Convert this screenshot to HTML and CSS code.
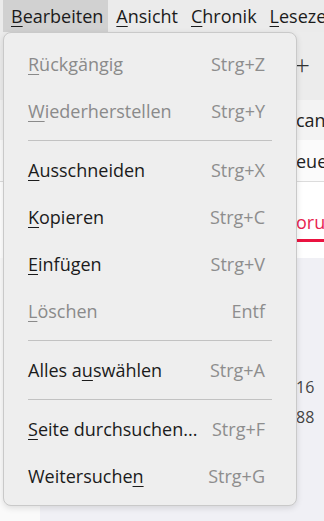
FILE: index.html
```html
<!DOCTYPE html>
<html lang="de">
<head>
    <meta charset="UTF-8">
    <meta name="viewport" content="width=device-width, initial-scale=1.0">
    <title>Bearbeiten</title>
    <link rel="stylesheet" href="styles.css">
</head>
<body>
    <div class="menubar">
        <span class="menubar-item active"><u>B</u>earbeiten</span>
        <span class="menubar-item"><u>A</u>nsicht</span>
        <span class="menubar-item"><u>C</u>hronik</span>
        <span class="menubar-item"><u>L</u>esezeichen</span>
    </div>

    <div class="toolbar">
        <span class="new-tab">+</span>
    </div>
    <div class="urlbar"><span class="page-text">can</span></div>
    <div class="bookmarks"><span class="page-text">euer</span></div>
    <div class="tabs-row">
        <span class="page-tab">orun</span>
    </div>
    <div class="content">
        <div class="sidebar"></div>
        <div class="main">
            <div class="num num-first">16</div>
            <div class="num">88</div>
        </div>
    </div>

    <!-- Kontextmenü Bearbeiten -->
    <div class="popup">
        <div class="item disabled">
            <span class="label"><u>R</u>ückgängig</span>
            <span class="shortcut">Strg+Z</span>
        </div>
        <div class="item disabled">
            <span class="label"><u>W</u>iederherstellen</span>
            <span class="shortcut">Strg+Y</span>
        </div>
        <div class="separator"></div>
        <div class="item">
            <span class="label"><u>A</u>usschneiden</span>
            <span class="shortcut">Strg+X</span>
        </div>
        <div class="item">
            <span class="label"><u>K</u>opieren</span>
            <span class="shortcut">Strg+C</span>
        </div>
        <div class="item">
            <span class="label"><u>E</u>infügen</span>
            <span class="shortcut">Strg+V</span>
        </div>
        <div class="item disabled">
            <span class="label"><u>L</u>öschen</span>
            <span class="shortcut">Entf</span>
        </div>
        <div class="separator"></div>
        <div class="item">
            <span class="label">Alles a<u>u</u>swählen</span>
            <span class="shortcut">Strg+A</span>
        </div>
        <div class="separator"></div>
        <div class="item">
            <span class="label"><u>S</u>eite durchsuchen...</span>
            <span class="shortcut">Strg+F</span>
        </div>
        <div class="item">
            <span class="label">Weitersuche<u>n</u></span>
            <span class="shortcut">Strg+G</span>
        </div>
    </div>
</body>
</html>
```

FILE: styles.css
```css
* {
    box-sizing: border-box;
    margin: 0;
    padding: 0;
}

body {
    font-family: 'Open Sans', 'Noto Sans', Arial, sans-serif;
    font-size: 18px;
    color: #1b1b1b;
    background-color: #f0f0f5;
    height: 521px;
    overflow: hidden;
    position: relative;
}

u {
    text-decoration-thickness: 1px;
    text-underline-offset: 3px;
}

.menubar {
    height: 32px;
    display: flex;
    align-items: stretch;
    padding-left: 3px;
    background-color: #ebebeb;
    white-space: nowrap;
}

.menubar-item {
    display: flex;
    align-items: center;
    padding: 0 5px 0 8px;
}

.menubar-item.active {
    background-color: #d1d1d1;
}

.toolbar {
    height: 68px;
    background-color: #ececec;
    display: flex;
    align-items: center;
    justify-content: flex-end;
    padding: 0 14px 0 0;
}

.new-tab {
    font-size: 28px;
    font-weight: 300;
    color: #333;
    margin-top: -4px;
}

.urlbar {
    height: 40px;
    background-color: #f3f3f3;
    display: flex;
    align-items: center;
    padding-left: 296px;
}

.bookmarks {
    height: 42px;
    background-color: #fbfbfb;
    border-bottom: 1px solid #dcdcdc;
    display: flex;
    align-items: center;
    padding-left: 296px;
}

.page-text {
    white-space: nowrap;
    color: #222;
}

.tabs-row {
    height: 76px;
    background-color: #ffffff;
    padding-left: 296px;
    padding-top: 28px;
}

.page-tab {
    display: inline-block;
    color: #e8234f;
    white-space: nowrap;
    padding-bottom: 5px;
    border-bottom: 3px solid #ea1340;
    width: 60px;
}

.content {
    display: flex;
    height: 263px;
}

.sidebar {
    width: 40px;
    background-color: #fafafa;
}

.main {
    flex: 1;
    padding-top: 118px;
    padding-left: 256px;
    color: #444;
    font-size: 16px;
}

.num {
    height: 30px;
}

.popup {
    position: absolute;
    left: 3px;
    top: 32px;
    width: 294px;
    padding: 7px 0 6px;
    background-color: #eeeeee;
    border: 1px solid #c9c9c9;
    border-radius: 8px;
    box-shadow: 0 2px 6px rgba(0, 0, 0, 0.12);
}

.item {
    height: 47px;
    display: flex;
    align-items: center;
    justify-content: space-between;
    padding: 0 31px 0 24px;
    white-space: nowrap;
}

.item.disabled .label {
    color: #8a8a8a;
}

.shortcut {
    color: #8d8d8d;
}

.separator {
    height: 12px;
    margin: 0 24px 0 24px;
    display: flex;
    align-items: center;
}

.separator::after {
    content: '';
    flex: 1;
    height: 1px;
    background-color: #c2c2c2;
}
```
